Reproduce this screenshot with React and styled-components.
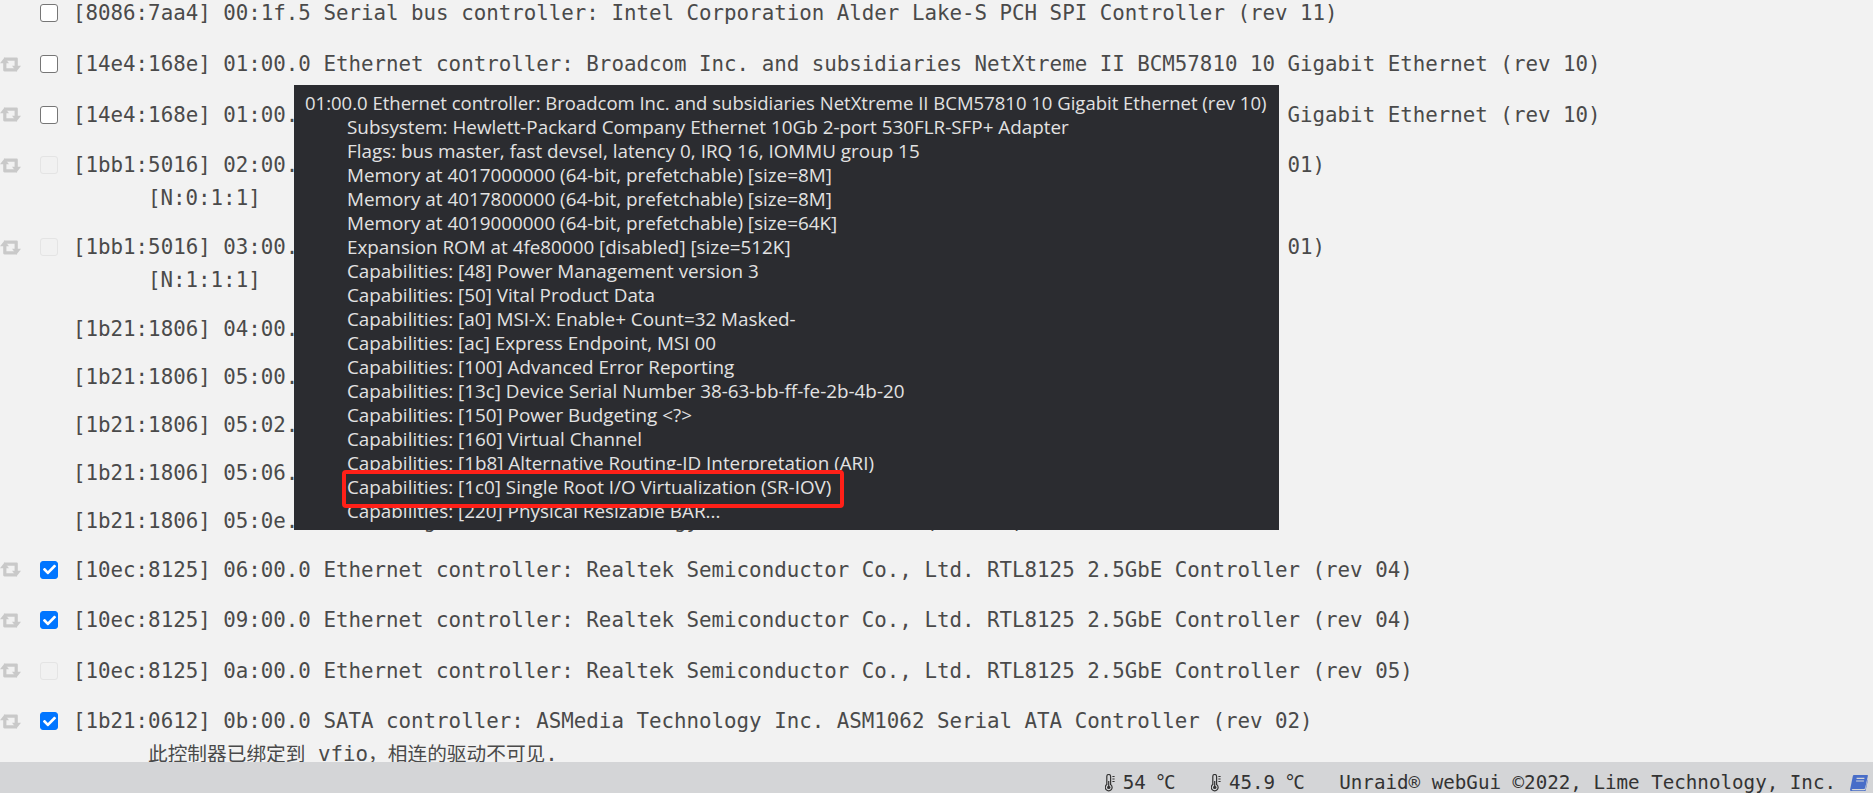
import styled, { createGlobalStyle } from 'styled-components';
import { FaCheck } from 'react-icons/fa';

const devices = [
  { text: '[8086:7aa4] 00:1f.5 Serial bus controller: Intel Corporation Alder Lake-S PCH SPI Controller (rev 11)', box: 'off', noIcon: true, first: true },
  { text: '[14e4:168e] 01:00.0 Ethernet controller: Broadcom Inc. and subsidiaries NetXtreme II BCM57810 10 Gigabit Ethernet (rev 10)', box: 'off' },
  { text: '[14e4:168e] 01:00.1 Ethernet controller: Broadcom Inc. and subsidiaries NetXtreme II BCM57810 10 Gigabit Ethernet (rev 10)', box: 'off' },
  { text: '[1bb1:5016] 02:00.0 Non-Volatile memory controller: Seagate Technology PLC FireCuda 530 SSD (rev 01)', box: 'disabled', sub: '[N:0:1:1]' },
  { text: '[1bb1:5016] 03:00.0 Non-Volatile memory controller: Seagate Technology PLC FireCuda 530 SSD (rev 01)', box: 'disabled', sub: '[N:1:1:1]' },
  { text: '[1b21:1806] 04:00.0 PCI bridge: ASMedia Technology Inc. Device 1806 (rev 01)' },
  { text: '[1b21:1806] 05:00.0 PCI bridge: ASMedia Technology Inc. Device 1806 (rev 01)' },
  { text: '[1b21:1806] 05:02.0 PCI bridge: ASMedia Technology Inc. Device 1806 (rev 01)' },
  { text: '[1b21:1806] 05:06.0 PCI bridge: ASMedia Technology Inc. Device 1806 (rev 01)' },
  { text: '[1b21:1806] 05:0e.0 PCI bridge: ASMedia Technology Inc. Device 1806 (rev 01)' },
  { text: '[10ec:8125] 06:00.0 Ethernet controller: Realtek Semiconductor Co., Ltd. RTL8125 2.5GbE Controller (rev 04)', box: 'on' },
  { text: '[10ec:8125] 09:00.0 Ethernet controller: Realtek Semiconductor Co., Ltd. RTL8125 2.5GbE Controller (rev 04)', box: 'on' },
  { text: '[10ec:8125] 0a:00.0 Ethernet controller: Realtek Semiconductor Co., Ltd. RTL8125 2.5GbE Controller (rev 05)', box: 'disabled' },
  { text: '[1b21:0612] 0b:00.0 SATA controller: ASMedia Technology Inc. ASM1062 Serial ATA Controller (rev 02)', box: 'on', bound: true },
];

const lspci = [
  'Subsystem: Hewlett-Packard Company Ethernet 10Gb 2-port 530FLR-SFP+ Adapter',
  'Flags: bus master, fast devsel, latency 0, IRQ 16, IOMMU group 15',
  'Memory at 4017000000 (64-bit, prefetchable) [size=8M]',
  'Memory at 4017800000 (64-bit, prefetchable) [size=8M]',
  'Memory at 4019000000 (64-bit, prefetchable) [size=64K]',
  'Expansion ROM at 4fe80000 [disabled] [size=512K]',
  'Capabilities: [48] Power Management version 3',
  'Capabilities: [50] Vital Product Data',
  'Capabilities: [a0] MSI-X: Enable+ Count=32 Masked-',
  'Capabilities: [ac] Express Endpoint, MSI 00',
  'Capabilities: [100] Advanced Error Reporting',
  'Capabilities: [13c] Device Serial Number 38-63-bb-ff-fe-2b-4b-20',
  'Capabilities: [150] Power Budgeting <?>',
  'Capabilities: [160] Virtual Channel',
  'Capabilities: [1b8] Alternative Routing-ID Interpretation (ARI)',
  'Capabilities: [1c0] Single Root I/O Virtualization (SR-IOV)',
  'Capabilities: [220] Physical Resizable BAR...',
];

function BindIcon() {
  return (
    <svg width="21" height="15" viewBox="0 0 21 15" fill="currentColor">
      <path d="M0 6.2 4.5.4 9 6.2H6.4v5h8.2l2.6 3.2H4.6c-.9 0-1.4-.5-1.4-1.4V6.2z" />
      <path d="M21 8.8l-4.5 5.8L12 8.8h2.6v-5H6.4L3.8.6H16.4c.9 0 1.4.5 1.4 1.4v6.8z" />
    </svg>
  );
}

function ThermoIcon() {
  return (
    <svg width="10" height="18" viewBox="0 0 10 18" fill="none" stroke="currentColor" strokeWidth="1.2">
      <path d="M1.8 10.6V2.4a1.9 1.9 0 0 1 3.8 0v8.2a3.4 3.4 0 1 1-3.8 0z" />
      <circle cx="3.7" cy="13.4" r="1.7" fill="currentColor" stroke="none" />
      <path d="M3.7 12V7M7.4 2.5h2.2M7.4 5h2.2M7.4 7.5h2.2" />
    </svg>
  );
}

function ManualIcon() {
  return (
    <svg width="18" height="16" viewBox="0 0 18 16">
      <path fill="#486dc8" d="M4.2 0h13.2c.4 0 .6.3.5.7l-2.7 12.1c-.2.8-.8 1.3-1.6 1.3H2.6c-.7 0-1 .4-.9.7.1.2.4.4.8.4h11.6c.7 0 1.2-.4 1.4-1l2.2-10 .2 1-2.3 10.5c-.2.7-.8 1.2-1.6 1.2H1.7C.7 16.4 0 15.5.1 14.6L2.8 1.2C3 .5 3.5 0 4.2 0z" />
      <path stroke="#d4d5d7" strokeWidth="1.1" d="M6.6 3.4h7.8M6.1 6h7.8" />
    </svg>
  );
}

export default function App() {
  return (
    <Page>
      <GlobalStyle />
      <DeviceList>
        {devices.map((d) => (
          <Device key={d.text} $short={!d.box} $first={d.first}>
            <Line>
              <IconSlot>{d.box && !d.noIcon && <BindIcon />}</IconSlot>
              <BoxSlot>
                {d.box && <CheckBox $state={d.box}>{d.box === 'on' && <FaCheck />}</CheckBox>}
              </BoxSlot>
              <span>{d.text}</span>
            </Line>
            {d.sub && <SubLine>{d.sub}</SubLine>}
            {d.bound && (
              <SubLine>
                <Cjk>此控制器已绑定到</Cjk> vfio<Cjk>{'\uFF0C'}相连的驱动不可见</Cjk>.
              </SubLine>
            )}
          </Device>
        ))}
      </DeviceList>

      <Tooltip>
        <TipTitle>01:00.0 Ethernet controller: Broadcom Inc. and subsidiaries NetXtreme II BCM57810 10 Gigabit Ethernet (rev 10)</TipTitle>
        {lspci.map((l) => (
          <TipLine key={l}>{l}</TipLine>
        ))}
        <Highlight />
      </Tooltip>

      <Footer>
        <Temp><ThermoIcon />54<Unit>°C</Unit></Temp>
        <Temp $last><ThermoIcon />45.9<Unit>°C</Unit></Temp>
        <Copyright>Unraid® webGui ©2022, Lime Technology, Inc.</Copyright>
        <ManualIcon />
      </Footer>
    </Page>
  );
}

const GlobalStyle = createGlobalStyle`
  html, body {
    margin: 0;
    padding: 0;
    background: #f2f2f2;
    overflow: hidden;
  }
`;

const Page = styled.div`
  position: relative;
  display: flex;
  flex-direction: column;
  width: 1873px;
  height: 793px;
  overflow: hidden;
  font-family: "DejaVu Sans Mono", "Noto Sans CJK SC", monospace;
  font-size: 20.8px;
  color: #4a4a4a;
`;

const DeviceList = styled.div`
  flex: 1;
  min-height: 0;
  margin-top: -12px;
`;

const Device = styled.div`
  padding: ${(p) => (p.$short ? '12px 0' : p.$first ? '13px 0 14.3px' : '13px 0 13.4px')};
`;

const Line = styled.div`
  display: flex;
  align-items: center;
  height: 24px;
  white-space: pre;
`;

const IconSlot = styled.div`
  display: flex;
  width: 40px;
  color: #c9c9c9;
`;

const BoxSlot = styled.div`
  display: flex;
  width: 18px;
  margin-right: 15px;
`;

const boxBorder = { off: '#767676', disabled: '#e4e4e4', on: '#0075ff' };
const boxFill = { off: '#fff', disabled: '#f1f1f1', on: '#0075ff' };

const CheckBox = styled.span`
  display: flex;
  align-items: center;
  justify-content: center;
  box-sizing: border-box;
  width: 18px;
  height: 18px;
  border: 1.5px solid ${(p) => boxBorder[p.$state]};
  border-radius: 3px;
  background: ${(p) => boxFill[p.$state]};
  color: #fff;
  font-size: 13px;
`;

const SubLine = styled.div`
  height: 24px;
  margin-top: 9px;
  margin-bottom: -1px;
  padding-left: 148px;
  line-height: 24px;
  white-space: pre;
`;

const Cjk = styled.span`
  font-size: 19.7px;
`;

const Tooltip = styled.div`
  position: absolute;
  left: 294px;
  top: 85px;
  box-sizing: border-box;
  width: 985px;
  height: 445px;
  padding: 6px 0 0 11px;
  overflow: hidden;
  background: #2b2c30;
  color: #e2e2e2;
  font-family: "Open Sans", "Noto Sans", sans-serif;
  line-height: 24px;
  white-space: pre;
`;

const TipTitle = styled.div`
  font-size: 18.5px;
`;

const TipLine = styled.div`
  padding-left: 42px;
  font-size: 18.85px;
`;

const Highlight = styled.div`
  position: absolute;
  left: 48px;
  top: 385px;
  box-sizing: border-box;
  width: 502px;
  height: 38px;
  border: 4px solid #ff2018;
  border-radius: 4px;
`;

const Footer = styled.div`
  display: flex;
  align-items: center;
  justify-content: flex-end;
  flex: none;
  box-sizing: border-box;
  height: 31px;
  padding: 10px 5px 0 0;
  background: #d4d5d7;
  color: #333;
  font-size: 19.2px;
  white-space: pre;
`;

const Temp = styled.span`
  display: flex;
  align-items: center;
  gap: 8px;
  margin-right: ${(p) => (p.$last ? '35px' : '36px')};
`;

const Unit = styled.span`
  margin-left: 1px;
  letter-spacing: -2.5px;
  padding-right: 2px;
`;

const Copyright = styled.span`
  margin-right: 14px;
`;
